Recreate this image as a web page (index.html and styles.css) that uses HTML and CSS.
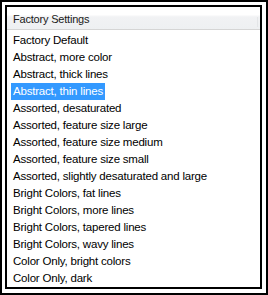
FILE: index.html
```html
<!DOCTYPE html>
<html>
<head>
<meta charset="utf-8">
<link rel="stylesheet" href="styles.css">
</head>
<body>
<div class="frame">
  <div class="panel">
    <div class="header"><span class="header-label">Factory Settings</span><span class="splitter"></span></div>
    <ul class="list">
      <li class="item"><span class="label">Factory Default</span></li>
      <li class="item"><span class="label">Abstract, more color</span></li>
      <li class="item"><span class="label">Abstract, thick lines</span></li>
      <li class="item selected"><span class="label">Abstract, thin lines</span></li>
      <li class="item"><span class="label">Assorted, desaturated</span></li>
      <li class="item"><span class="label">Assorted, feature size large</span></li>
      <li class="item"><span class="label">Assorted, feature size medium</span></li>
      <li class="item"><span class="label">Assorted, feature size small</span></li>
      <li class="item"><span class="label">Assorted, slightly desaturated and large</span></li>
      <li class="item"><span class="label">Bright Colors, fat lines</span></li>
      <li class="item"><span class="label">Bright Colors, more lines</span></li>
      <li class="item"><span class="label">Bright Colors, tapered lines</span></li>
      <li class="item"><span class="label">Bright Colors, wavy lines</span></li>
      <li class="item"><span class="label">Color Only, bright colors</span></li>
      <li class="item"><span class="label">Color Only, dark</span></li>
    </ul>
  </div>
</div>
</body>
</html>
```
FILE: styles.css
```css
html, body {
  margin: 0;
  padding: 0;
  background: #ffffff;
}
body {
  font-family: "Liberation Sans", Arial, sans-serif;
  font-size: 11.5px;
  letter-spacing: -0.2px;
  color: #000;
}
.frame {
  box-sizing: border-box;
  width: 268px;
  height: 295px;
  border: 2px solid #000;
  padding: 3px 4px 4px 3px;
  background: #fff;
}
.panel {
  box-sizing: border-box;
  height: 100%;
  border: 2px solid #000;
  display: flex;
  flex-direction: column;
  overflow: hidden;
}
.header {
  height: 22px;
  border-bottom: 1px solid #d5d5d5;
  background: linear-gradient(#ffffff 0%, #ffffff 35%, #f1f2f4 45%, #eef0f2 100%);
  display: flex;
  align-items: center;
  padding-left: 6px;
  padding-top: 1px;
  box-sizing: content-box;
  color: #1a1a1a;
}
.header-label {
  flex: 1;
  font-size: 11px;
}
.splitter {
  width: 1px;
  height: 10px;
  margin-right: 2px;
  margin-top: 6px;
  background: #e4e6e8;
}
.list {
  list-style: none;
  margin: 0;
  padding: 2px 0 0 4px;
}
.item {
  height: 17px;
  line-height: 17px;
  white-space: nowrap;
}
.label {
  display: inline-block;
  padding: 0 2px;
  height: 17px;
}
.selected .label {
  background: #3399ff;
  color: #fff;
}
```
